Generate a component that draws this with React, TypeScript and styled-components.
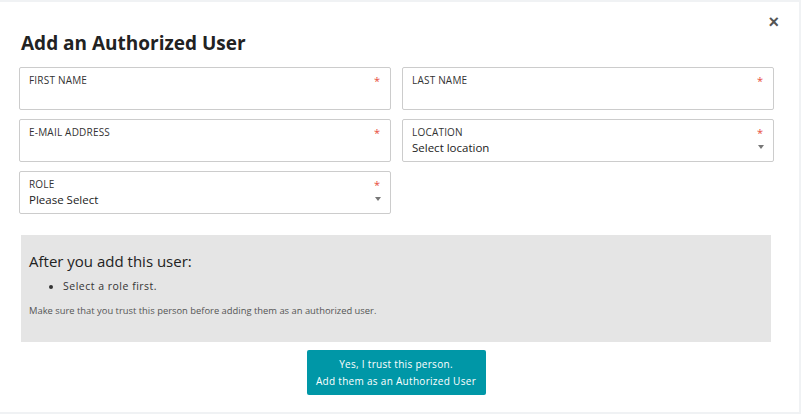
import styled, { createGlobalStyle } from "styled-components";

const Global = createGlobalStyle`
  body { margin: 0; font-family: "Open Sans", "Noto Sans", sans-serif; background: #f0f2f4; }
`;
const Modal = styled.div`
  position: relative;
  width: 799px;
  height: 410px;
  margin-top: 2px;
  background: #fff;
  box-sizing: border-box;
  padding: 28px 28px 0 19px;
`;
const Close = styled.button`
  position: absolute;
  top: 10px;
  right: 20px;
  border: none;
  background: none;
  font-size: 18px;
  font-weight: bold;
  color: #555;
  padding: 0;
`;
const Title = styled.h2`
  margin: 0 0 11px 2px;
  font-size: 19px;
  line-height: 26px;
  font-weight: 700;
  color: #222;
`;
const Grid = styled.div`
  display: grid;
  grid-template-columns: 372px 372px;
  column-gap: 11px;
  row-gap: 9px;
`;
const Field = styled.div`
  position: relative;
  height: 43px;
  border: 1px solid #ccc;
  border-radius: 2px;
  box-sizing: border-box;
  padding: 5px 9px;
`;
const Label = styled.div`
  font-size: 10px;
  color: #333;
  line-height: 14px;
  letter-spacing: 0.2px;
`;
const Value = styled.div`
  font-size: 11.5px;
  color: #222;
  margin-top: 1px;
`;
const Star = styled.span`
  position: absolute;
  top: 5px;
  right: 10px;
  color: #e74c3c;
  font-size: 11px;
`;
const Caret = styled.span`
  position: absolute;
  right: 9px;
  bottom: 9px;
  border: 3.5px solid transparent;
  border-top: 4px solid #777;
`;
const Info = styled.div`
  margin: 21px 0 0 2px;
  width: 750px;
  height: 107px;
  background: #e5e5e5;
  box-sizing: border-box;
  padding: 16px 8px;
`;
const InfoTitle = styled.div`
  font-size: 15px;
  color: #222;
`;
const List = styled.ul`
  margin: 8px 0 11px;
  padding-left: 34px;
  font-size: 10.5px;
  letter-spacing: 0.5px;
  color: #333;
`;
const Note = styled.div`
  font-size: 9.4px;
  color: #555;
`;
const Actions = styled.div`
  display: flex;
  justify-content: center;
  margin-top: 8px;
  width: 754px;
`;
const Primary = styled.button`
  width: 179px;
  height: 45px;
  background: #0097a7;
  color: #fff;
  border: none;
  border-radius: 2px;
  font-family: inherit;
  font-size: 10px;
  line-height: 17px;
  letter-spacing: 0.3px;
`;

const fields: { label: string; value?: string; select?: boolean }[] = [
  { label: "FIRST NAME" },
  { label: "LAST NAME" },
  { label: "E-MAIL ADDRESS" },
  { label: "LOCATION", value: "Select location", select: true },
  { label: "ROLE", value: "Please Select", select: true },
];

export default function App() {
  return (
    <>
      <Global />
      <Modal>
        <Close>×</Close>
        <Title>Add an Authorized User</Title>
        <Grid>
          {fields.map((f) => (
            <Field key={f.label}>
              <Label>{f.label}</Label>
              {f.value && <Value>{f.value}</Value>}
              <Star>*</Star>
              {f.select && <Caret />}
            </Field>
          ))}
        </Grid>
        <Info>
          <InfoTitle>After you add this user:</InfoTitle>
          <List>
            <li>Select a role first.</li>
          </List>
          <Note>Make sure that you trust this person before adding them as an authorized user.</Note>
        </Info>
        <Actions>
          <Primary>
            Yes, I trust this person.
            <br />
            Add them as an Authorized User
          </Primary>
        </Actions>
      </Modal>
    </>
  );
}
